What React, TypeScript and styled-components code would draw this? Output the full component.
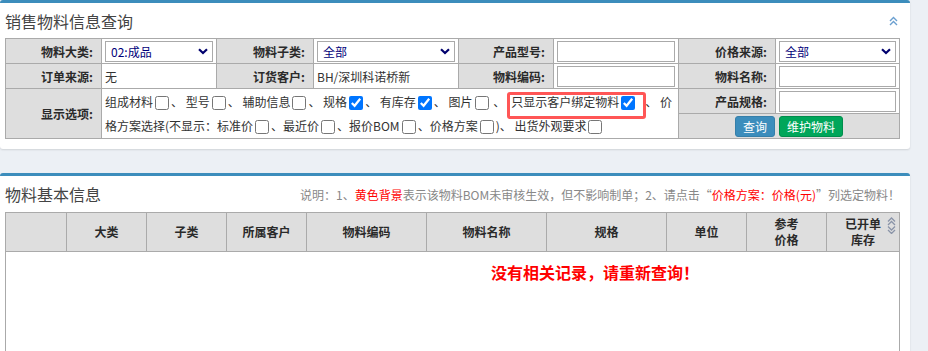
import styled, { createGlobalStyle } from "styled-components";

const GlobalStyle = createGlobalStyle`
  body {
    margin: 0;
    background: #ecf0f5;
    font-family: "Noto Sans CJK SC", "Noto Sans", sans-serif;
    font-size: 12px;
    color: #333;
  }
`;

const Page = styled.div`
  width: 910px;
`;

// Panel
const Box = styled.div<{ $gap?: number }>`
  background: #fff;
  border-top: 3px solid #3c8dbc;
  border-radius: 3px;
  box-shadow: 0 1px 2px rgba(0, 0, 0, 0.12);
  margin-bottom: ${(p) => p.$gap ?? 0}px;
  padding-bottom: 10px;
`;

const BoxHeader = styled.div<{ $h: number }>`
  height: ${(p) => p.$h}px;
  display: flex;
  align-items: center;
  justify-content: space-between;
  padding: 0 12px 0 5px;
`;

const BoxTitle = styled.h3`
  margin: 0;
  font-size: 16px;
  font-weight: normal;
  color: #444;
  line-height: 1;
`;

const Notes = styled.div`
  color: #888;
  font-size: 12px;
  margin-right: -2px;
`;

const Red = styled.span`
  color: #f00;
`;

// Query table
const QueryTable = styled.table`
  margin: 0 5px;
  width: 894px;
  border-collapse: collapse;
  table-layout: fixed;
  tr {
    height: 25px;
  }
  td {
    border: 1px solid #aaa;
  }
`;

const Label = styled.td`
  background: #dedede;
  font-weight: bold;
  text-align: right;
  padding: 0 8px 0 0;
  color: #2a2a2a;
  white-space: nowrap;
`;

const Value = styled.td`
  padding: 0 3px;
  background: #fff;
`;

const SelectWrap = styled.div`
  position: relative;
`;

const Select = styled.select`
  appearance: none;
  display: block;
  width: 100%;
  height: 21px;
  box-sizing: border-box;
  border: 1px solid #aaa;
  border-radius: 0;
  padding: 0 18px 0 5px;
  background: #fff;
  color: #00007a;
  font-family: inherit;
  font-size: 12px;
`;

const Chevron = styled.svg`
  position: absolute;
  right: 5px;
  top: 7px;
  pointer-events: none;
`;

const TextInput = styled.input`
  display: block;
  width: 100%;
  height: 21px;
  box-sizing: border-box;
  border: 1px solid #aaa;
  padding: 0 4px;
  font-size: 12px;
`;

const Options = styled.td`
  padding: 1px 3px 0 3px;
  vertical-align: top;
  line-height: 24px;
  color: #333;
  background: #fff;
`;

const OptLine = styled.div`
  white-space: nowrap;
  height: 24px;
`;

const Check = styled.input.attrs({ type: "checkbox" })`
  width: 14px;
  height: 14px;
  margin: 0 2px;
  vertical-align: -3px;
`;

// red annotation frame drawn over the text
const Highlight = styled.span`
  position: relative;
  margin: 0 8px 0 6px;
  &::after {
    content: "";
    position: absolute;
    left: -4px;
    right: -9px;
    top: -1px;
    bottom: -9px;
    border: 3px solid #ff5656;
    border-radius: 3px;
    pointer-events: none;
  }
`;

const ButtonCell = styled.td`
  background: #dedede;
  text-align: center;
`;

const Btn = styled.button<{ $color: string; $border: string }>`
  height: 21px;
  padding: 0 7px;
  margin: 0 2px;
  border: 1px solid ${(p) => p.$border};
  border-radius: 3px;
  background: ${(p) => p.$color};
  color: #fff;
  font-family: inherit;
  font-size: 12px;
  line-height: 19px;
  vertical-align: middle;
`;

// List table
const ListTable = styled.table`
  margin: 0 5px;
  width: 894px;
  border-collapse: collapse;
  table-layout: fixed;
  th {
    height: 38px;
    border: 1px solid #aaa;
    background: #dedede;
    font-weight: bold;
    font-size: 12px;
    line-height: 16px;
    color: #2a2a2a;
    padding: 0;
  }
  td {
    border: 1px solid #aaa;
  }
`;

const SortTh = styled.th`
  position: relative;
`;

const SortIcon = styled.svg`
  position: absolute;
  right: 3px;
  top: 4px;
`;

const Empty = styled.td`
  height: 130px;
  vertical-align: top;
  padding: 8px 0 0 485px;
  color: #f00;
  font-weight: bold;
  font-size: 16px;
`;

const DownArrow = () => (
  <Chevron width="10" height="7" viewBox="0 0 10 7">
    <path d="M1 1.2 L5 5 L9 1.2" fill="none" stroke="#00006e" strokeWidth="2.2" />
  </Chevron>
);

const Dropdown = ({ value }: { value: string }) => (
  <SelectWrap>
    <Select defaultValue={value}>
      <option>{value}</option>
    </Select>
    <DownArrow />
  </SelectWrap>
);

const headers = ["", "大类", "子类", "所属客户", "物料编码", "物料名称", "规格", "单位"];
const widths = [61, 80, 80, 80, 120, 120, 120, 80, 80, 73];

const App = () => {
  return (
    <Page>
      <GlobalStyle />
      <Box $gap={24}>
        <BoxHeader $h={35}>
          <BoxTitle>销售物料信息查询</BoxTitle>
          <svg width="9" height="10" viewBox="0 0 9 10">
            <path
              d="M1 5 L4.5 1.5 L8 5 M1 9 L4.5 5.5 L8 9"
              fill="none"
              stroke="#6a9fd0"
              strokeWidth="1.4"
            />
          </svg>
        </BoxHeader>
        <QueryTable>
          <colgroup>
            {[96, 115, 97, 145, 95, 125, 97, 124].map((w, i) => (
              <col key={i} style={{ width: w }} />
            ))}
          </colgroup>
          <tbody>
            <tr>
              <Label>物料大类:</Label>
              <Value>
                <Dropdown value="02:成品" />
              </Value>
              <Label>物料子类:</Label>
              <Value>
                <Dropdown value="全部" />
              </Value>
              <Label>产品型号:</Label>
              <Value>
                <TextInput />
              </Value>
              <Label>价格来源:</Label>
              <Value>
                <Dropdown value="全部" />
              </Value>
            </tr>
            <tr>
              <Label>订单来源:</Label>
              <Value>无</Value>
              <Label>订货客户:</Label>
              <Value>BH/深圳科诺桥新</Value>
              <Label>物料编码:</Label>
              <Value>
                <TextInput />
              </Value>
              <Label>物料名称:</Label>
              <Value>
                <TextInput />
              </Value>
            </tr>
            <tr>
              <Label rowSpan={2}>显示选项:</Label>
              <Options colSpan={5} rowSpan={2}>
                <OptLine>
                  组成材料<Check />、 型号<Check />、 辅助信息<Check />、 规格
                  <Check defaultChecked />、 有库存<Check defaultChecked />、 图片<Check /> 、
                  <Highlight>
                    只显示客户绑定物料<Check defaultChecked />
                  </Highlight>
                  、 价
                </OptLine>
                <OptLine>
                  格方案选择(不显示：标准价<Check />、最近价<Check />、报价BOM<Check />、价格方案
                  <Check />)、 出货外观要求<Check />
                </OptLine>
              </Options>
              <Label>产品规格:</Label>
              <Value>
                <TextInput />
              </Value>
            </tr>
            <tr>
              <ButtonCell colSpan={2}>
                <Btn $color="#3c8dbc" $border="#367fa9">查询</Btn>
                <Btn $color="#00a65a" $border="#008d4c">维护物料</Btn>
              </ButtonCell>
            </tr>
          </tbody>
        </QueryTable>
      </Box>

      <Box>
        <BoxHeader $h={36}>
          <BoxTitle>物料基本信息</BoxTitle>
          <Notes>
            说明：1、<Red>黄色背景</Red>表示该物料BOM未审核生效，但不影响制单；2、请点击“
            <Red>价格方案：价格(元)</Red>”列选定物料！
          </Notes>
        </BoxHeader>
        <ListTable>
          <colgroup>
            {widths.map((w, i) => (
              <col key={i} style={{ width: w }} />
            ))}
          </colgroup>
          <thead>
            <tr>
              {headers.map((h, i) => (
                <th key={i}>{h}</th>
              ))}
              <th>
                参考
                <br />
                价格
              </th>
              <SortTh>
                已开单
                <br />
                库存
                <SortIcon width="9" height="17" viewBox="0 0 9 17">
                  <path
                    d="M1 4.5 L4.5 1 L8 4.5 M1 8 L4.5 4.5 L8 8 M1 9.5 L4.5 13 L8 9.5 M1 13 L4.5 16.5 L8 13"
                    fill="none"
                    stroke="#8a94a8"
                    strokeWidth="1.3"
                  />
                </SortIcon>
              </SortTh>
            </tr>
          </thead>
          <tbody>
            <tr>
              <Empty colSpan={10}>没有相关记录，请重新查询！</Empty>
            </tr>
          </tbody>
        </ListTable>
      </Box>
    </Page>
  );
};

export default App;
